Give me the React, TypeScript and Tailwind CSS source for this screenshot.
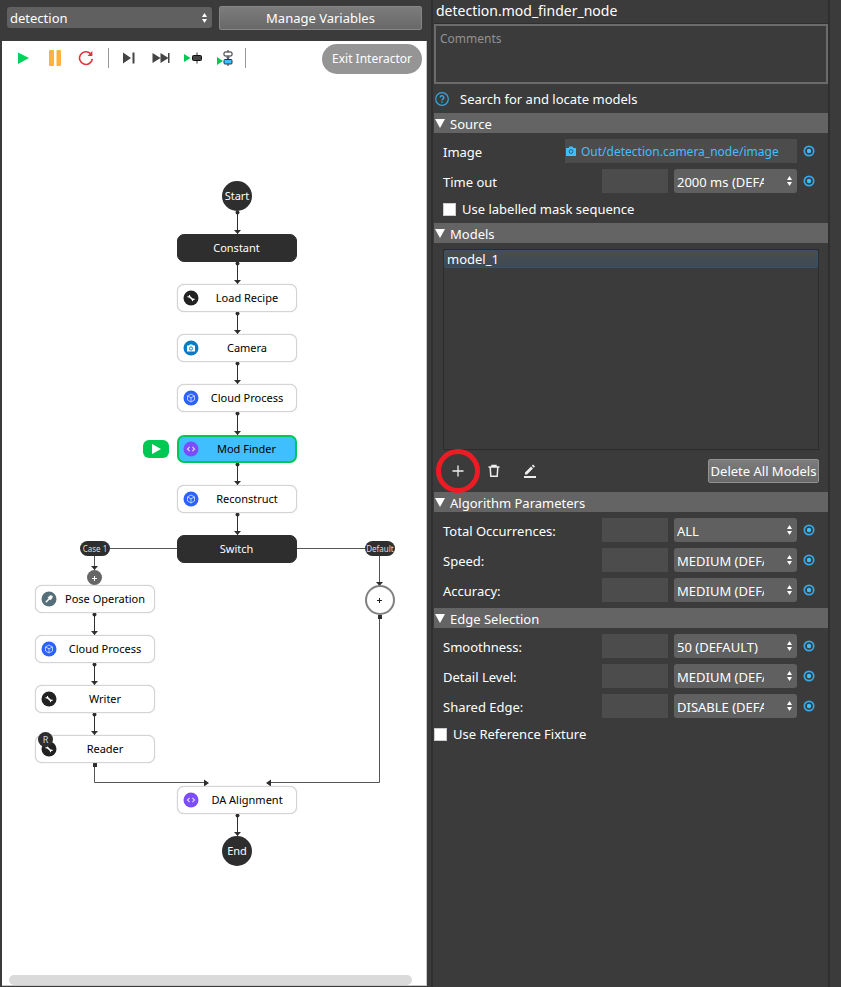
import { type ReactNode } from "react";

type NodeKind = "dark" | "tool" | "camera" | "cloud" | "code" | "pose";

interface FlowNode {
  label: string;
  kind: NodeKind;
  x: number;
  y: number;
  active?: boolean;
  reader?: boolean;
}

const nodes: FlowNode[] = [
  { label: "Constant", kind: "dark", x: 175, y: 193 },
  { label: "Load Recipe", kind: "tool", x: 175, y: 243 },
  { label: "Camera", kind: "camera", x: 175, y: 293 },
  { label: "Cloud Process", kind: "cloud", x: 175, y: 343 },
  { label: "Mod Finder", kind: "code", x: 175, y: 394, active: true },
  { label: "Reconstruct", kind: "cloud", x: 175, y: 444 },
  { label: "Switch", kind: "dark", x: 175, y: 494 },
  { label: "Pose Operation", kind: "pose", x: 33, y: 544 },
  { label: "Cloud Process", kind: "cloud", x: 33, y: 594 },
  { label: "Writer", kind: "tool", x: 33, y: 644 },
  { label: "Reader", kind: "tool", x: 33, y: 694, reader: true },
  { label: "DA Alignment", kind: "code", x: 175, y: 745 },
];

const links = [
  { x: 235, from: 171, to: 193 },
  { x: 235, from: 222, to: 243 },
  { x: 235, from: 272, to: 293 },
  { x: 235, from: 322, to: 343 },
  { x: 235, from: 372, to: 394 },
  { x: 235, from: 423, to: 444 },
  { x: 235, from: 473, to: 494 },
  { x: 92, from: 573, to: 594 },
  { x: 92, from: 623, to: 644 },
  { x: 92, from: 673, to: 694 },
  { x: 235, from: 774, to: 795 },
];

const kindFill: Record<NodeKind, string> = {
  dark: "#2e2e2e",
  tool: "#222222",
  camera: "#0a7ac4",
  cloud: "#2962ff",
  code: "#7c4dff",
  pose: "#546e7a",
};

function NodeIcon({ kind }: { kind: NodeKind }) {
  return (
    <svg viewBox="0 0 16 16" className="size-4 shrink-0" aria-hidden="true">
      <circle cx="8" cy="8" r="7.5" fill={kindFill[kind]} />
      {kind === "tool" && (
        <g fill="none" stroke="#fff">
          <path d="M6 6.2l4 3.8" strokeWidth="1.6" />
          <path d="M4.4 6.8l1.8.2.4-2M11.6 9.4l-1.8-.2-.4 2" strokeWidth="1.1" />
        </g>
      )}
      {kind === "camera" && (
        <g>
          <path d="M4 5.6h2L6.8 4.6h2.4l.8 1h2v6H4z" fill="#fff" />
          <circle cx="8" cy="8.5" r="1.6" fill="none" stroke="#0a7ac4" strokeWidth="1" />
        </g>
      )}
      {kind === "cloud" && (
        <path
          d="M8 4l3.5 1.9v4.1L8 12l-3.5-2V5.9zM4.5 5.9L8 7.8l3.5-1.9M8 7.8V12"
          fill="none"
          stroke="#c6d5ff"
          strokeWidth="0.9"
        />
      )}
      {kind === "code" && (
        <path d="M6.600 5.800L4.500 8l2.100 2.200M9.400 5.800L11.500 8l-2.100 2.200" fill="none" stroke="#e6dcff" strokeWidth="1.100" />
      )}
      {kind === "pose" && (
        <g stroke="#fff" fill="#fff">
          <path d="M4.800 11.200L8.500 7.500" strokeWidth="1.500" />
          <path d="M7 6.500L9 4.500l2.500.5L11 7.500 9 9z" strokeWidth="0.400" />
        </g>
      )}
    </svg>
  );
}

function NodeBox({ node }: { node: FlowNode }) {
  const skin = node.active
    ? "border-2 border-[#00c853] bg-[#40bfff] text-black"
    : node.kind === "dark"
      ? "border border-[#2e2e2e] bg-[#2e2e2e] text-white"
      : "border border-[#d4d4d4] bg-white text-black shadow-[0_0_1px_#bbb]";
  return (
    <div
      className={`absolute flex h-7 w-[120px] items-center rounded-[7px] text-[11px] ${skin}`}
      style={{ left: node.x, top: node.y }}
    >
      {node.kind !== "dark" && (
        <span className={`flex ${node.active ? "pl-[4px]" : "pl-[5px]"}`}>
          <NodeIcon kind={node.kind} />
        </span>
      )}
      <span className="flex-1 whitespace-nowrap pr-px text-center">{node.label}</span>
      {node.reader && (
        <span className="absolute -top-1 left-0.5 flex size-[15px] items-center justify-center rounded-full bg-[#2e2e2e] text-[9px] text-[#ddd]">
          R
        </span>
      )}
    </div>
  );
}

function Connectors() {
  return (
    <svg className="absolute left-0 top-0 h-[850px] w-[425px]" viewBox="0 0 425 850" aria-hidden="true">
      {links.map((l) => (
        <g key={`${l.x}-${l.from}`} fill="#2e2e2e">
          <rect x={l.x} y={l.from} width="1" height={l.to - l.from} />
          <circle cx={l.x + 0.5} cy={l.from + 0.5} r="2" />
          <path d={`M${l.x - 3} ${l.to - 4}h7l-3.500 4z`} />
        </g>
      ))}
      <g fill="none" stroke="#555">
        <path d="M107 507.500h68M295 507.500h68M92.500 515v18M377.500 515v30M92.500 725v16.500H202M377.500 575v166.500H268" />
      </g>
      <g fill="#2e2e2e">
        <path d="M89 525h7l-3.500 4zM374 541h7l-3.500 4zM202 738.500l5 3.500-5 3.500zM269 738.500l-5 3.500 5 3.500z" />
        <rect x="91" y="722" width="4" height="4" />
        <rect x="376" y="574" width="4" height="4" />
      </g>
    </svg>
  );
}

function Toolbar() {
  const btn = "flex h-5 items-center justify-center";
  return (
    <div className="flex h-[34px] items-center pl-[13px]">
      <button aria-label="Run" className={`${btn} w-4`}>
        <svg viewBox="0 0 16 16" className="size-4"><path d="M3 2.500L14 8 3 14z" fill="#00d25b" /></svg>
      </button>
      <button aria-label="Pause" className={`${btn} ml-4 w-4`}>
        <svg viewBox="0 0 16 16" className="size-4" fill="#ffb13d">
          <rect x="2" width="5" height="16" rx="1" /><rect x="9.500" width="4.500" height="16" rx="1" />
        </svg>
      </button>
      <button aria-label="Restart" className={`${btn} ml-[15px] w-4`}>
        <svg viewBox="0 0 16 16" className="size-4" fill="none" stroke="#e0343b" strokeWidth="1.600">
          <path d="M14.300 8.800A6.400 6.400 0 1 1 12.600 3.700L14 5" />
          <path d="M14.300 1v5H9.500z" fill="#e0343b" stroke="none" />
        </svg>
      </button>
      <span className="ml-3.5 h-5 w-px bg-[#999]" />
      <button aria-label="Step" className={`${btn} ml-3 w-4`}>
        <svg viewBox="0 0 16 16" className="size-4" fill="#444"><path d="M2 2.500L10 8l-8 5.500zM11.500 2.500h2v11h-2z" /></svg>
      </button>
      <button aria-label="Fast forward" className={`${btn} ml-3.5 w-5`}>
        <svg viewBox="0 0 20 16" className="h-4 w-5" fill="#444"><path d="M1.500 3l8 5-8 5zM9.500 3l8 5-8 5zM17 3h1.500v10H17z" /></svg>
      </button>
      <button aria-label="Run to node" className={`${btn} ml-3 w-5`}>
        <svg viewBox="0 0 20 16" className="h-4 w-5">
          <path d="M1 4L7.500 8 1 12z" fill="#00c853" />
          <path d="M14 2.500v11" stroke="#333" />
          <rect x="9.500" y="5.500" width="9" height="5" rx="1" fill="#444" stroke="#111" />
        </svg>
      </button>
      <button aria-label="Run from node" className={`${btn} ml-3 w-5`}>
        <svg viewBox="0 0 20 16" className="h-4 w-5">
          <path d="M2 7L8 11l-6 4z" fill="#00c853" />
          <path d="M13 0v16" stroke="#333" />
          <rect x="9" y="2" width="8" height="4" rx="1" fill="#fff" stroke="#222" />
          <path d="M10.500 7.500h5L13 9z" fill="#444" />
          <rect x="9" y="9.500" width="8" height="4.500" rx="1" fill="#40bfff" stroke="#234" />
        </svg>
      </button>
      <span className="ml-2.5 h-5 w-px bg-[#999]" />
      <button className="ml-auto mr-1 mt-px h-[30px] w-[100px] rounded-full bg-[#959595] text-xs text-white">
        Exit Interactor
      </button>
    </div>
  );
}

function Canvas() {
  return (
    <div className="relative ml-0.5 mr-1 flex flex-1 flex-col overflow-hidden border-b border-r border-[#c8c8c8] bg-white">
      <Toolbar />
      <Connectors />
      <div className="absolute left-[220px] top-[140px] flex size-[30px] items-center justify-center rounded-full bg-[#2e2e2e] text-[11px] text-white">
        Start
      </div>
      {nodes.map((n) => (
        <NodeBox key={`${n.x}-${n.y}`} node={n} />
      ))}
      <div className="absolute left-[220px] top-[795px] flex size-[30px] items-center justify-center rounded-full bg-[#2e2e2e] text-[11px] text-white">
        End
      </div>
      <div className="absolute left-[141px] top-[399px] flex h-[18px] w-[26px] items-center justify-center rounded-[6px] bg-[#00c853]">
        <svg viewBox="0 0 10 10" className="size-2.5"><path d="M1 0L10 5 1 10z" fill="#fff" /></svg>
      </div>
      <div className="absolute left-[78px] top-[500px] flex h-[15px] w-[30px] items-center justify-center whitespace-nowrap rounded-full bg-[#2e2e2e] text-[8px] text-[#ddd]">
        Case 1
      </div>
      <div className="absolute left-[363px] top-[500px] flex h-[15px] w-[30px] items-center justify-center whitespace-nowrap rounded-full bg-[#2e2e2e] text-[8px] text-[#ddd]">
        Default
      </div>
      <button
        aria-label="Add node to Case 1"
        className="absolute left-[85px] top-[529px] flex size-[15px] items-center justify-center rounded-full bg-[#666]"
      >
        <svg viewBox="0 0 7 7" className="mt-px size-[7px]"><path d="M3.500 1v5M1 3.500h5" stroke="#fff" /></svg>
      </button>
      <button
        aria-label="Add node to Default"
        className="absolute left-[363px] top-[544px] flex size-[30px] items-center justify-center rounded-full border-2 border-[#808080] bg-white"
      >
        <svg viewBox="0 0 7 7" className="mr-px mt-px size-[7px]"><path d="M3.500 1v5M1 3.500h5" stroke="#222" /></svg>
      </button>
      <div className="ml-[7px] mr-3.5 mt-auto h-2.5 rounded-full bg-[#dadada]" />
    </div>
  );
}

interface SelectProps {
  label: string;
  value: string;
  className: string;
  padding: string;
}

function Select({ label, value, className, padding }: SelectProps) {
  return (
    <span className={`relative flex ${className}`}>
      <select
        aria-label={label}
        defaultValue={value}
        className={`h-full w-full appearance-none overflow-hidden rounded-[3px] bg-[#606060] text-[13px] text-white ${padding}`}
      >
        <option>{value}</option>
      </select>
      <svg viewBox="0 0 5 10" className="pointer-events-none absolute inset-y-0 right-[5px] my-auto h-2.5 w-[5px]" fill="#fff">
        <path d="M2.500 0L5 4H0zM2.500 10L5 6H0z" />
      </svg>
    </span>
  );
}

function Ring({ label }: { label: string }) {
  return (
    <button aria-label={`Link ${label}`} className="ml-1.5 size-3 shrink-0">
      <svg viewBox="0 0 12 12" className="size-3">
        <circle cx="6" cy="6" r="4.700" fill="none" stroke="#35a8e8" strokeWidth="1.700" />
        <circle cx="6" cy="6" r="2.200" fill="#40bfff" />
      </svg>
    </button>
  );
}

function Row({ label, children }: { label: string; children: ReactNode }) {
  return (
    <div className="flex h-6 items-center pl-[9px] pr-[13px]">
      <span className="flex-1 pt-0.5">{label}</span>
      {children}
      <Ring label={label} />
    </div>
  );
}

function ParamRow({ label, value }: { label: string; value: string }) {
  return (
    <Row label={label}>
      <input aria-label={`${label} link`} className="h-6 w-[66px] bg-[#4c4c4c]" />
      <Select label={label} value={value} className="ml-1.5 h-6 w-[123px]" padding="pl-[3px] pr-[33px] pt-0.5" />
    </Row>
  );
}

function SectionHeader({ title }: { title: string }) {
  return (
    <button className="flex h-5 w-full items-center bg-[#646464] text-left">
      <svg viewBox="0 0 10 9" className="ml-px h-[9px] w-2.5" fill="#fff"><path d="M0 0h10L5 9z" /></svg>
      <span className="pl-[5px] pt-0.5">{title}</span>
    </button>
  );
}

function Check({ label, className }: { label: string; className?: string }) {
  return (
    <label className={`flex items-center ${className ?? ""}`}>
      <input type="checkbox" className="size-[13px] appearance-none border border-[#ccc] bg-white" />
      <span className="pl-1.5">{label}</span>
    </label>
  );
}

function Properties() {
  return (
    <div className="flex w-[410px] shrink-0 border-l-2 border-[#2f2f2f]">
      <div className="mr-[11px] flex-1 border-r-2 border-[#2f2f2f] pl-px">
        <h1 className="h-6 border-b border-[#2f2f2f] pl-0.5 text-sm leading-[22px]">detection.mod_finder_node</h1>
        <textarea
          aria-label="Comments"
          placeholder="Comments"
          className="block h-[60px] w-full resize-none border-2 border-[#6b6b6b] px-1 py-[3px] text-xs leading-5 placeholder:text-[#929292]"
        />
        <div className="flex h-[29px] items-center">
          <svg viewBox="0 0 14 14" className="ml-px size-3.5" fill="none" stroke="#35a8e0">
            <circle cx="7" cy="7" r="6.300" strokeWidth="1.200" />
            <path d="M5.200 5.600a1.800 1.800 0 1 1 2.700 1.500C7.200 7.500 7 7.800 7 8.500M7 9.500v1.300" strokeWidth="1.400" />
          </svg>
          <span className="pl-[11px]">Search for and locate models</span>
        </div>

        <SectionHeader title="Source" />
        <div className="flex flex-col gap-1.5 pt-1.5">
          <Row label="Image">
            <a href="#image" className="flex h-6 w-[232px] items-center bg-[#4c4c4c] pl-px text-xs text-[#40bfff]">
              <svg viewBox="0 0 10 10" className="h-2.5 w-2.5">
                <path d="M0 2h2.500L3.500.500h3L7.500 2H10v8H0z" fill="#40bfff" />
                <circle cx="5" cy="5.500" r="1.900" fill="none" stroke="#2b5f80" />
              </svg>
              <span className="pl-[5px] pt-0.5">Out/detection.camera_node/image</span>
            </a>
          </Row>
          <ParamRow label="Time out" value="2000 ms (DEFAULT)" />
        </div>
        <Check label="Use labelled mask sequence" className="h-[30px] pl-[9px] pt-0.5" />

        <SectionHeader title="Models" />
        <ul className="ml-[9px] mr-[9px] mt-1.5 h-[201px] border border-[#2c2c2c]">
          <li className="h-[18px] rounded-[2px] border border-[#36536b] bg-linear-to-b from-[#4a4d50] to-[#3c4a55] pl-0.5 leading-4">
            model_1
          </li>
        </ul>
        <div className="flex h-[42px] items-center pl-4 pr-[9px]">
          <button aria-label="Add model" className="relative flex size-4 items-center justify-center">
            <svg viewBox="0 0 16 16" className="size-4"><path d="M8 2.500v11M2.500 8h11" stroke="#eee" strokeWidth="1.300" /></svg>
            <span className="absolute -inset-3.5 rounded-full border-[5px] border-[#ed1c24]" />
          </button>
          <button aria-label="Delete model" className="ml-5 size-4">
            <svg viewBox="0 0 16 16" className="size-4" fill="none" stroke="#eee" strokeWidth="1.500">
              <path d="M2.500 4h11M6 3.500V2.500h4v1M4.200 4l.6 9.300h6.400l.6-9.300" />
            </svg>
          </button>
          <button aria-label="Edit model" className="ml-5 size-4">
            <svg viewBox="0 0 16 16" className="size-4" fill="#eee">
              <path d="M2 13h12v2H2zM3 9.500l6-6 2 2-6 6H3zM9.800 2.700L11 1.500l2 2-1.200 1.200z" />
            </svg>
          </button>
          <button className="ml-auto h-6 w-[111px] whitespace-nowrap rounded-[2px] border border-[#929292] bg-linear-to-b from-[#7c7c7c] to-[#696969]">
            Delete All Models
          </button>
        </div>

        <SectionHeader title="Algorithm Parameters" />
        <div className="flex flex-col gap-1.5 py-1.5">
          <ParamRow label="Total Occurrences:" value="ALL" />
          <ParamRow label="Speed:" value="MEDIUM (DEFAULT)" />
          <ParamRow label="Accuracy:" value="MEDIUM (DEFAULT)" />
        </div>

        <SectionHeader title="Edge Selection" />
        <div className="flex flex-col gap-1.5 py-1.5">
          <ParamRow label="Smoothness:" value="50 (DEFAULT)" />
          <ParamRow label="Detail Level:" value="MEDIUM (DEFAULT)" />
          <ParamRow label="Shared Edge:" value="DISABLE (DEFAULT)" />
        </div>
        <Check label="Use Reference Fixture" className="h-5" />
      </div>
    </div>
  );
}

export default function App() {
  return (
    <div className="flex min-h-screen bg-[#3b3b3b] font-['Noto_Sans','Open_Sans',sans-serif] text-[13px] leading-5 text-white">
      <div className="flex min-w-0 flex-1 flex-col pb-px">
        <div className="flex h-[41px] items-start gap-[7px] pl-[7px] pr-[9px] pt-1.5">
          <Select label="Flow" value="detection" className="mt-px h-[21px] flex-1" padding="pl-[3px] pr-5" />
          <button className="h-6 w-[203px] rounded-[2px] border border-[#868686] bg-linear-to-b from-[#7c7c7c] to-[#686868]">
            Manage Variables
          </button>
        </div>
        <Canvas />
      </div>
      <Properties />
    </div>
  );
}
